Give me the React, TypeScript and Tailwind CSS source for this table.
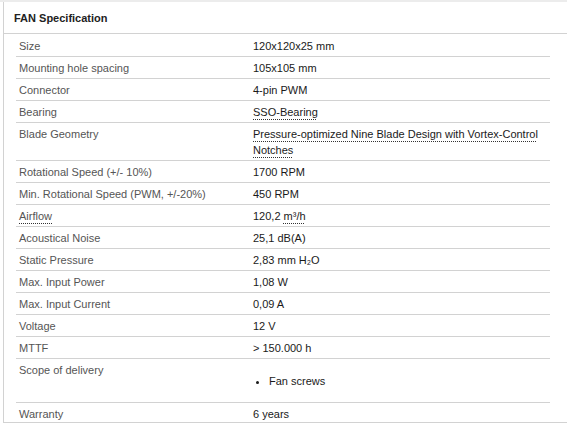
import React from 'react';

type Spec = { label: React.ReactNode; value: React.ReactNode; tall?: boolean };

const dotted = 'underline decoration-dotted decoration-1 underline-offset-[3px] decoration-[#333]';

const specs: Spec[] = [
  { label: 'Size', value: '120x120x25 mm' },
  { label: 'Mounting hole spacing', value: '105x105 mm' },
  { label: 'Connector', value: '4-pin PWM' },
  { label: 'Bearing', value: <span className={dotted}>SSO-Bearing</span> },
  {
    label: 'Blade Geometry',
    value: <span className={dotted}>Pressure-optimized Nine Blade Design with Vortex-Control Notches</span>,
  },
  { label: 'Rotational Speed (+/- 10%)', value: '1700 RPM' },
  { label: 'Min. Rotational Speed (PWM, +/-20%)', value: '450 RPM' },
  {
    label: <span className={dotted}>Airflow</span>,
    value: (
      <>
        120,2 <span className={dotted}>m³/h</span>
      </>
    ),
  },
  { label: 'Acoustical Noise', value: '25,1 dB(A)' },
  { label: 'Static Pressure', value: '2,83 mm H₂O' },
  { label: 'Max. Input Power', value: '1,08 W' },
  { label: 'Max. Input Current', value: '0,09 A' },
  { label: 'Voltage', value: '12 V' },
  { label: 'MTTF', value: '> 150.000 h' },
  {
    label: 'Scope of delivery',
    value: (
      <ul className="my-[11px] list-disc pl-[15px] marker:text-[9px]">
        <li className="pl-[1px]">Fan screws</li>
      </ul>
    ),
  },
  { label: 'Warranty', value: '6 years' },
];

export default function App() {
  return (
    <div className="w-[567px] h-[425px] bg-white overflow-hidden text-[11px] leading-4" style={{ fontFamily: '"Liberation Sans", Arial, sans-serif' }}>
      <div className="h-[2px] bg-[#ececec]" />
      <div className="ml-[3px] h-[421px] border-l border-b border-[#d2d2d2]">
        {/* Header */}
        <div className="h-[32px] border-b border-[#d2d2d2] pl-[10px] flex items-center">
          <span className="font-bold text-[#222]">FAN Specification</span>
        </div>

        {/* Spec table */}
        <div className="ml-[12px] w-[534px]">
          {specs.map((s, i) => (
            <div key={i} className={`grid grid-cols-[234px_1fr] pt-[3px] pb-[2px] ${i > 0 ? 'border-t border-[#d2d2d2]' : 'pt-[4px]'}`}>
              <div className="pl-[3px] text-[#555]">{s.label}</div>
              <div className="pl-[3px] pr-[10px] text-[#1a1a1a]">{s.value}</div>
            </div>
          ))}
        </div>
      </div>
    </div>
  );
}
